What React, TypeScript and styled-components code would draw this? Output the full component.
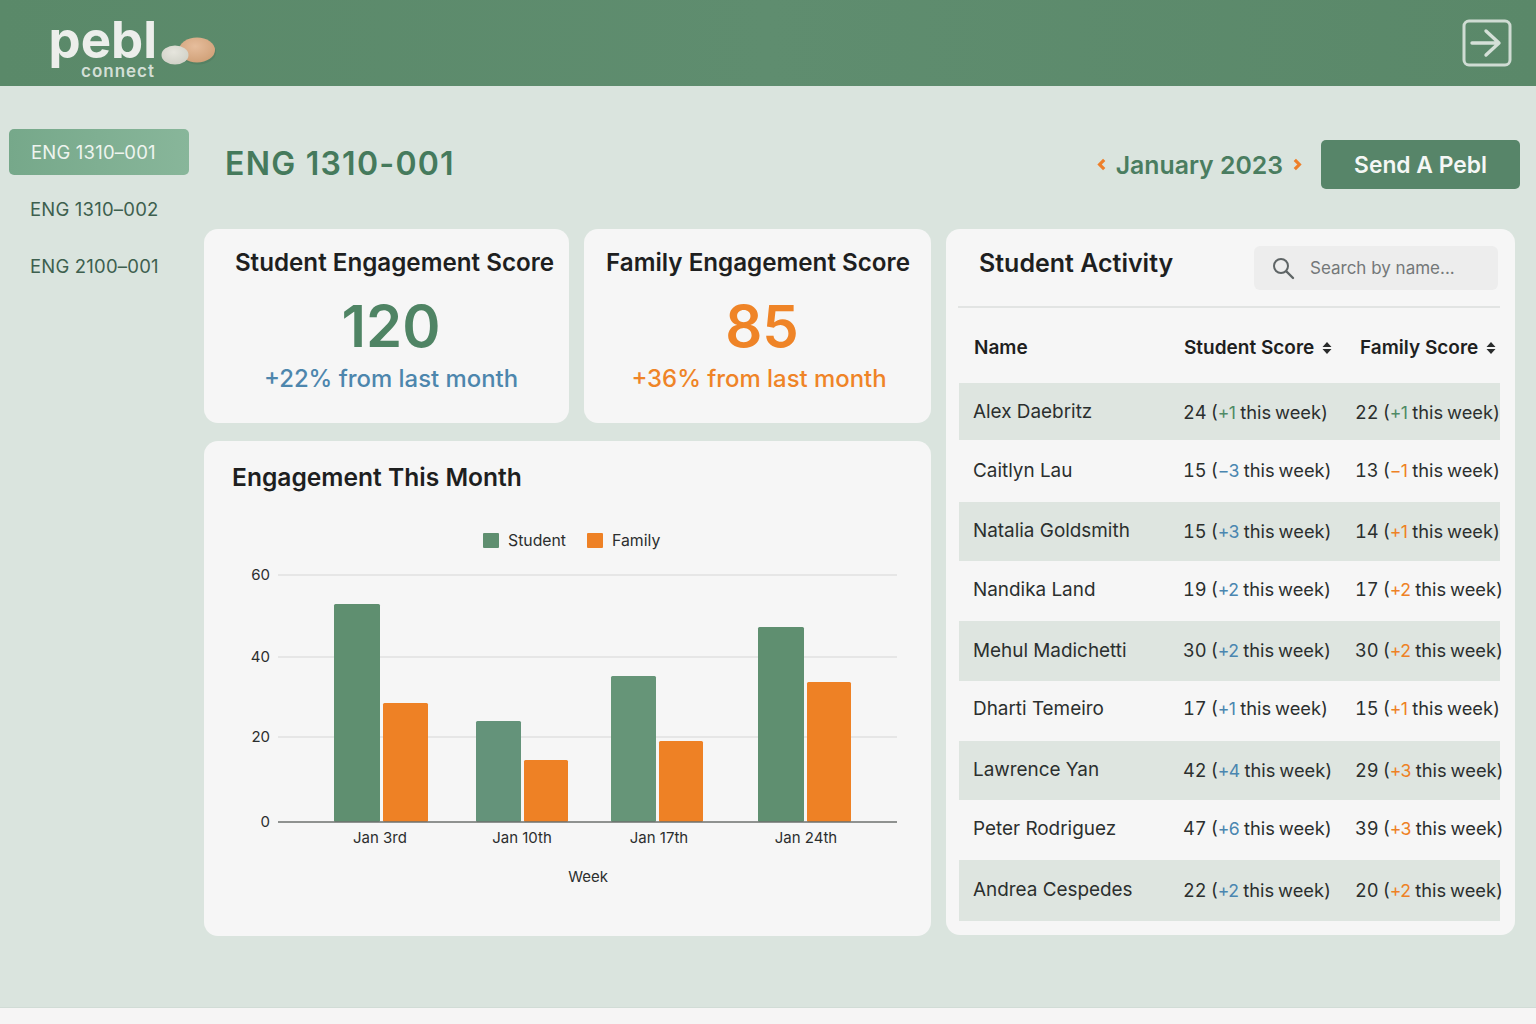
import React from "react";
import styled, { createGlobalStyle } from "styled-components";

const Global = createGlobalStyle`
  html, body { margin: 0; padding: 0; background: #f6f5f5; }
  body { font-family: Inter, "Liberation Sans", sans-serif; }
  * { box-sizing: border-box; }
`;

const Page = styled.div`
  width: 1536px;
  height: 1024px;
  display: flex;
  flex-direction: column;
  overflow: hidden;
`;

const Header = styled.header`
  height: 86px;
  flex: none;
  display: flex;
  align-items: flex-start;
  justify-content: space-between;
  padding: 18px 24px 0 50px;
  background: linear-gradient(90deg, #5a8969 0%, #5f8d6f 50%, #5a8869 100%);
`;

const Logo = styled.div`
  display: flex;
  align-items: flex-start;
`;

const LogoWords = styled.div`
  display: flex;
  flex-direction: column;
  align-items: flex-end;
  width: 107px;
`;

const LogoName = styled.span`
  font-family: Inter, sans-serif;
  font-size: 51px;
  line-height: 44px;
  font-weight: 700;
  letter-spacing: 0;
  color: #eceeeb;
`;

const LogoSub = styled.span`
  font-size: 17px;
  line-height: 18px;
  font-weight: 600;
  letter-spacing: 1px;
  color: #d3dfd6;
  margin-right: 2px;
`;

const Stones = styled.svg`
  width: 58px;
  height: 36px;
  margin: 18px 0 0 3px;
`;

const ExitIcon = styled.svg`
  width: 50px;
  height: 48px;
  margin-top: 1px;
`;

const Body = styled.div`
  height: 922px;
  flex: none;
  display: flex;
  background: #dae4de;
  border-bottom: 1px solid #d1dcd6;
`;

const Sidebar = styled.nav`
  width: 204px;
  flex: none;
  padding: 43px 15px 0 9px;
  display: flex;
  flex-direction: column;
  gap: 11px;
`;

const NavItem = styled.div<{ $active?: boolean }>`
  height: 46px;
  display: flex;
  align-items: center;
  padding-left: ${(p) => (p.$active ? 22 : 21)}px;
  border-radius: 5px;
  font-size: 18.5px;
  letter-spacing: 0.2px;
  color: ${(p) => (p.$active ? "#eef4ef" : "#3d5f4e")};
  background: ${(p) => (p.$active ? "linear-gradient(90deg, #76a88a, #88b69a)" : "transparent")};
`;

const Main = styled.main`
  flex: 1;
  display: flex;
  flex-direction: column;
  padding: 54px 16px 0 0;
`;

const TopBar = styled.div`
  height: 49px;
  display: flex;
  align-items: center;
  justify-content: space-between;
`;

const PageTitle = styled.h1`
  margin: -2px 0 0 21px;
  font-size: 32px;
  font-weight: 600;
  line-height: 40px;
  letter-spacing: 1.25px;
  color: #457a5c;
`;

const TopActions = styled.div`
  display: flex;
  align-items: center;
`;

const MonthNav = styled.div`
  display: flex;
  align-items: center;
  gap: 10px;
  margin-right: 19px;
`;

const Chevron = styled.svg`
  width: 9px;
  height: 13px;
  flex: none;
`;

const MonthLabel = styled.span`
  font-size: 24.8px;
  font-weight: 600;
  color: #4a7d60;
`;

const SendButton = styled.button`
  width: 199px;
  height: 49px;
  border: 0;
  border-radius: 5px;
  background: #578569;
  color: #f5f7f5;
  font-family: inherit;
  font-size: 22.8px;
  font-weight: 600;
`;

const Content = styled.div`
  margin-top: 40px;
  display: grid;
  grid-template-columns: 727px 569px;
  gap: 15px;
  align-items: start;
`;

const LeftColumn = styled.div`
  display: flex;
  flex-direction: column;
  gap: 18px;
`;

const ScoreRow = styled.div`
  display: grid;
  grid-template-columns: 365px 347px;
  gap: 15px;
`;

const ScoreCard = styled.section`
  height: 194px;
  display: flex;
  flex-direction: column;
  align-items: center;
  background: #f6f6f6;
  border-radius: 14px;
  padding-top: 18px;
`;

const ScoreTitle = styled.h2<{ $shift: number }>`
  margin: 0 0 0 ${(p) => p.$shift}px;
  font-size: 24.2px;
  line-height: 32px;
  font-weight: 600;
  color: #1e1f1f;
  white-space: nowrap;
`;

const ScoreValue = styled.div<{ $color: string; $shift: number }>`
  margin: 15px 0 0 ${(p) => p.$shift}px;
  font-size: 58px;
  line-height: 64px;
  font-weight: 600;
  color: ${(p) => p.$color};
`;

const ScoreDelta = styled.div<{ $color: string; $shift: number }>`
  margin: 5px 0 0 ${(p) => p.$shift}px;
  font-size: 23.9px;
  line-height: 32px;
  font-weight: 500;
  color: ${(p) => p.$color};
  white-space: nowrap;
`;

const ChartCard = styled.section`
  height: 495px;
  background: #f6f6f6;
  border-radius: 14px;
  padding-top: 20px;
`;

const ChartTitle = styled.h2`
  margin: 0 0 0 28px;
  font-size: 24.6px;
  line-height: 32px;
  font-weight: 600;
  color: #1e1f1f;
`;

const Legend = styled.div`
  margin: 35px 0 0 279px;
  display: flex;
  align-items: center;
  gap: 21px;
  height: 24px;
`;

const LegendItem = styled.div`
  display: flex;
  align-items: center;
  gap: 9px;
  font-size: 15.8px;
  color: #2c2e2e;
`;

const Swatch = styled.span<{ $color: string }>`
  width: 16px;
  height: 15px;
  border-radius: 1px;
  background: ${(p) => p.$color};
`;

const ChartSvg = styled.svg`
  display: block;
  width: 727px;
  height: 340px;
  margin-top: 8px;
  text {
    font-family: Inter, "Liberation Sans", sans-serif;
    font-size: 15px;
    fill: #2c2e2e;
  }
`;

const ActivityPanel = styled.section`
  height: 706px;
  background: #f6f6f6;
  border-radius: 14px;
  padding: 0 15px 0 12px;
`;

const ActivityHead = styled.div`
  height: 79px;
  display: flex;
  align-items: flex-start;
  justify-content: space-between;
  padding: 17px 2px 0 21px;
  border-bottom: 2px solid #e2e4e3;
`;

const ActivityTitle = styled.h2`
  margin: 0;
  font-size: 25px;
  line-height: 34px;
  font-weight: 600;
  color: #1e1f1f;
`;

const SearchBox = styled.label`
  width: 244px;
  height: 44px;
  display: flex;
  align-items: center;
  gap: 15px;
  padding-left: 17px;
  border-radius: 6px;
  background: #ededed;
`;

const SearchInput = styled.input`
  flex: 1;
  width: 100px;
  border: 0;
  outline: 0;
  padding: 0;
  background: transparent;
  font-family: inherit;
  font-size: 17px;
  color: #666;
  &::placeholder { color: #747879; opacity: 1; }
`;

const Grid = styled.div`
  display: grid;
  grid-template-columns: 225px 172px 1fr;
  align-items: center;
  margin-left: 1px;
`;

const TableHead = styled(Grid)`
  height: 75px;
  padding-top: 4px;
  font-size: 19px;
  font-weight: 600;
  color: #1e1f1f;
`;

const HeadCell = styled.div<{ $inset?: number }>`
  display: flex;
  align-items: center;
  gap: 8px;
  padding-left: ${(p) => p.$inset ?? 0}px;
  white-space: nowrap;
`;

const SortIcon = styled.svg`
  width: 10px;
  height: 14px;
  flex: none;
`;

const Row = styled(Grid)<{ $height: number; $lift: number; $shaded: boolean }>`
  height: ${(p) => p.$height}px;
  padding-bottom: ${(p) => p.$lift}px;
  background: ${(p) => (p.$shaded ? "#dee5e0" : "transparent")};
  font-size: 18.9px;
  color: #2b2f2e;
`;

const NameCell = styled.div`
  padding-left: 14px;
  white-space: nowrap;
`;

const ScoreCell = styled.div`
  margin-left: -1px;
  font-size: 18.3px;
  font-variant-numeric: tabular-nums;
  word-spacing: -1px;
  white-space: nowrap;
`;

const Delta = styled.span<{ $color: string }>`
  color: ${(p) => p.$color};
  font-size: 17.6px;
  letter-spacing: -0.6px;
  margin-right: 1px;
  font-variant-numeric: normal;
`;

const Footer = styled.div`
  flex: 1;
  background: #f6f5f5;
`;

const GREEN = "#4f8a66";
const BLUE = "#4a86b0";
const ORANGE = "#ee8125";

const rows = [
  { name: "Alex Daebritz", s: 24, sd: "+1", sc: GREEN, f: 22, fd: "+1", fc: GREEN, h: 57, lift: 0 },
  { name: "Caitlyn Lau", s: 15, sd: "−3", sc: BLUE, f: 13, fd: "−1", fc: ORANGE, h: 62, lift: 2 },
  { name: "Natalia Goldsmith", s: 15, sd: "+3", sc: BLUE, f: 14, fd: "+1", fc: ORANGE, h: 59, lift: 2 },
  { name: "Nandika Land", s: 19, sd: "+2", sc: BLUE, f: 17, fd: "+2", fc: ORANGE, h: 60, lift: 4 },
  { name: "Mehul Madichetti", s: 30, sd: "+2", sc: BLUE, f: 30, fd: "+2", fc: ORANGE, h: 60, lift: 2 },
  { name: "Dharti Temeiro", s: 17, sd: "+1", sc: BLUE, f: 15, fd: "+1", fc: ORANGE, h: 60, lift: 6 },
  { name: "Lawrence Yan", s: 42, sd: "+4", sc: BLUE, f: 29, fd: "+3", fc: ORANGE, h: 59, lift: 2 },
  { name: "Peter Rodriguez", s: 47, sd: "+6", sc: BLUE, f: 39, fd: "+3", fc: ORANGE, h: 60, lift: 4 },
  { name: "Andrea Cespedes", s: 22, sd: "+2", sc: BLUE, f: 20, fd: "+2", fc: ORANGE, h: 61, lift: 2 },
];

// Chart coordinates are relative to the chart svg, whose origin is at page (204, 560).
const ox = 204;
const oy = 560;
const bars = [
  { x: 334, w: 46, top: 604, c: "#5f8f70" },
  { x: 383, w: 45, top: 703, c: ORANGE },
  { x: 476, w: 45, top: 721, c: "#64937a" },
  { x: 524, w: 44, top: 760, c: ORANGE },
  { x: 611, w: 45, top: 676, c: "#669578" },
  { x: 659, w: 44, top: 741, c: ORANGE },
  { x: 758, w: 46, top: 627, c: "#5f8f70" },
  { x: 807, w: 44, top: 682, c: ORANGE },
];
const yTicks = [
  { l: "60", y: 575 },
  { l: "40", y: 657 },
  { l: "20", y: 737 },
  { l: "0", y: 822 },
];
const xTicks = [
  { l: "Jan 3rd", x: 380 },
  { l: "Jan 10th", x: 522 },
  { l: "Jan 17th", x: 659 },
  { l: "Jan 24th", x: 806 },
];

const Sort = () => (
  <SortIcon viewBox="0 0 10 14" aria-hidden>
    <path d="M5 1 L9.5 6 H0.5 Z M5 13 L0.5 8 H9.5 Z" fill="#2a2c2c" />
  </SortIcon>
);

export default function App() {
  return (
    <Page>
      <Global />
      <Header>
        <Logo>
          <LogoWords>
            <LogoName>pebl</LogoName>
            <LogoSub>connect</LogoSub>
          </LogoWords>
          <Stones viewBox="0 0 58 36" aria-hidden>
            <defs>
              <radialGradient id="tan" cx="45%" cy="35%" r="70%">
                <stop offset="0%" stopColor="#e6bd9c" />
                <stop offset="100%" stopColor="#cf9f76" />
              </radialGradient>
              <radialGradient id="pale" cx="45%" cy="35%" r="70%">
                <stop offset="0%" stopColor="#e6e5dd" />
                <stop offset="100%" stopColor="#cfd0c6" />
              </radialGradient>
            </defs>
            <ellipse cx="38" cy="16" rx="18" ry="12.5" fill="#4b7459" opacity="0.4" />
            <ellipse cx="37" cy="14" rx="18" ry="12.5" fill="url(#tan)" />
            <ellipse cx="15" cy="19" rx="13.5" ry="9.5" fill="url(#pale)" />
          </Stones>
        </Logo>
        <ExitIcon viewBox="0 0 50 48" fill="none" aria-hidden>
          <rect x="2" y="2" width="46" height="44" rx="5" stroke="#cfdcd3" strokeWidth="3" />
          <path d="M10 24 H36 M24 12 L37 24 L24 36" stroke="#d5e0d8" strokeWidth="3.4" strokeLinecap="round" strokeLinejoin="round" />
        </ExitIcon>
      </Header>
      <Body>
        <Sidebar>
          <NavItem $active>ENG 1310–001</NavItem>
          <NavItem>ENG 1310–002</NavItem>
          <NavItem>ENG 2100–001</NavItem>
        </Sidebar>
        <Main>
          <TopBar>
            <PageTitle>ENG 1310-001</PageTitle>
            <TopActions>
              <MonthNav>
                <Chevron viewBox="0 0 9 13" aria-hidden>
                  <path d="M7.2 1.8 L2.6 6.5 L7.2 11.2" fill="none" stroke="#ee7f2a" strokeWidth="3.2" />
                </Chevron>
                <MonthLabel>January 2023</MonthLabel>
                <Chevron viewBox="0 0 9 13" aria-hidden>
                  <path d="M1.8 1.8 L6.4 6.5 L1.8 11.2" fill="none" stroke="#ee7f2a" strokeWidth="3.2" />
                </Chevron>
              </MonthNav>
              <SendButton>Send A Pebl</SendButton>
            </TopActions>
          </TopBar>
          <Content>
            <LeftColumn>
              <ScoreRow>
                <ScoreCard>
                  <ScoreTitle $shift={16}>Student Engagement Score</ScoreTitle>
                  <ScoreValue $color="#4f8464" $shift={9}>120</ScoreValue>
                  <ScoreDelta $color="#4d86ad" $shift={9}>+22% from last month</ScoreDelta>
                </ScoreCard>
                <ScoreCard>
                  <ScoreTitle $shift={1}>Family Engagement Score</ScoreTitle>
                  <ScoreValue $color="#ef8427" $shift={9}>85</ScoreValue>
                  <ScoreDelta $color="#ef8427" $shift={3}>+36% from last month</ScoreDelta>
                </ScoreCard>
              </ScoreRow>
              <ChartCard>
                <ChartTitle>Engagement This Month</ChartTitle>
                <Legend>
                  <LegendItem><Swatch $color="#5f8f70" />Student</LegendItem>
                  <LegendItem><Swatch $color={ORANGE} />Family</LegendItem>
                </Legend>
                <ChartSvg viewBox="0 0 727 340" role="img">
                  {yTicks.slice(0, 3).map((t) => (
                    <line key={t.l} x1={278 - ox} x2={897 - ox} y1={t.y - oy} y2={t.y - oy} stroke="#e0e1e0" strokeWidth="1.5" />
                  ))}
                  {bars.map((b) => (
                    <rect key={b.x} x={b.x - ox} y={b.top - oy} width={b.w} height={822 - b.top} rx="1.5" fill={b.c} />
                  ))}
                  <line x1={278 - ox} x2={897 - ox} y1={822 - oy} y2={822 - oy} stroke="#6c706e" strokeWidth="1.5" />
                  {yTicks.map((t) => (
                    <text key={t.l} x={270 - ox} y={t.y - oy + 5} textAnchor="end">{t.l}</text>
                  ))}
                  {xTicks.map((t) => (
                    <text key={t.l} x={t.x - ox} y={843 - oy} textAnchor="middle">{t.l}</text>
                  ))}
                  <text x={588 - ox} y={882 - oy} textAnchor="middle">Week</text>
                </ChartSvg>
              </ChartCard>
            </LeftColumn>
            <ActivityPanel>
              <ActivityHead>
                <ActivityTitle>Student Activity</ActivityTitle>
                <SearchBox>
                  <svg width="24" height="24" viewBox="0 0 24 24" fill="none" aria-hidden>
                    <circle cx="10" cy="10" r="7" stroke="#5f6566" strokeWidth="2" />
                    <path d="M15.5 15.5 L22 22" stroke="#5f6566" strokeWidth="2.4" strokeLinecap="round" />
                  </svg>
                  <SearchInput placeholder="Search by name..." aria-label="Search by name" />
                </SearchBox>
              </ActivityHead>
              <TableHead>
                <HeadCell $inset={15}>Name</HeadCell>
                <HeadCell>Student Score <Sort /></HeadCell>
                <HeadCell $inset={4}>Family Score <Sort /></HeadCell>
              </TableHead>
              {rows.map((r, i) => (
                <Row key={r.name} $height={r.h} $lift={r.lift} $shaded={i % 2 === 0}>
                  <NameCell>{r.name}</NameCell>
                  <ScoreCell>
                    {r.s} (<Delta $color={r.sc}>{r.sd}</Delta> this week)
                  </ScoreCell>
                  <ScoreCell>
                    {r.f} (<Delta $color={r.fc}>{r.fd}</Delta> this week)
                  </ScoreCell>
                </Row>
              ))}
            </ActivityPanel>
          </Content>
        </Main>
      </Body>
      <Footer />
    </Page>
  );
}
